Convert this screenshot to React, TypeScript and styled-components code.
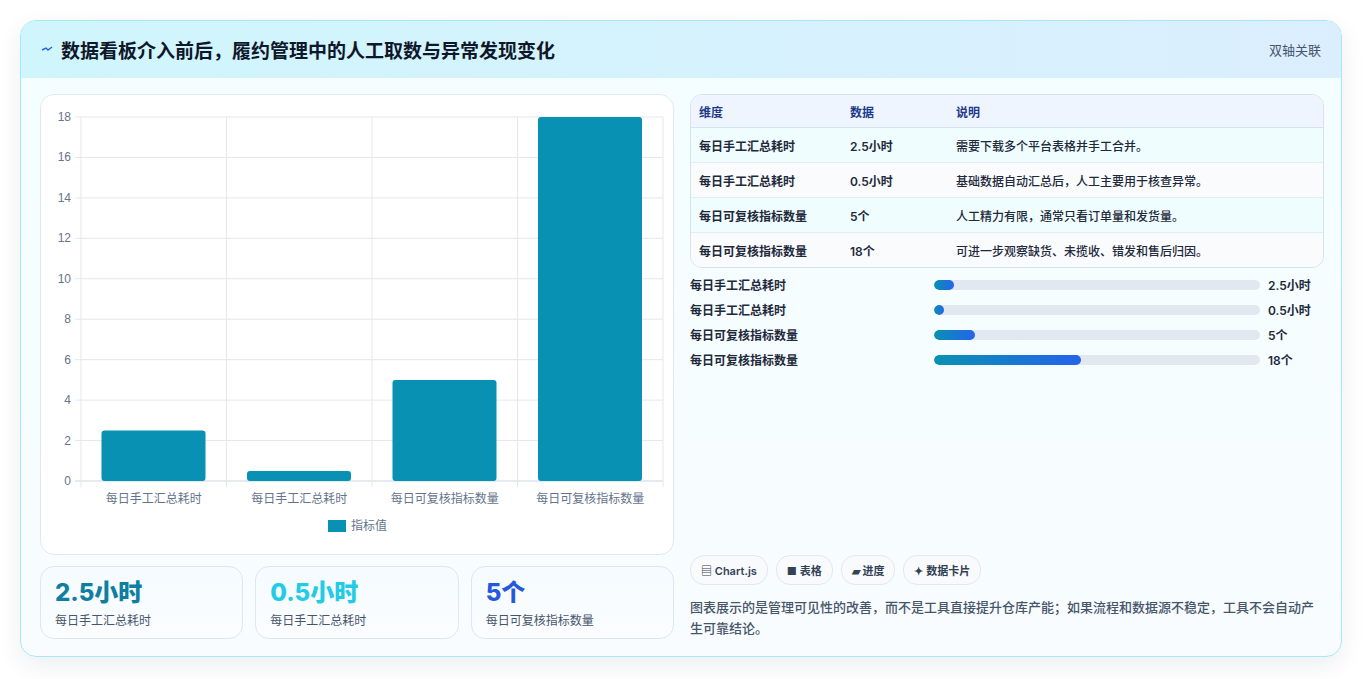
import React from 'react';
import styled, { createGlobalStyle } from 'styled-components';

const Global = createGlobalStyle`
  body { margin: 0; background: #ffffff; font-family: Inter, "Noto Sans CJK SC", sans-serif; }
`;

const Page = styled.div`
  padding: 20px 20px 22px 20px;
`;

const Card = styled.div`
  width: 1322px;
  height: 637px;
  box-sizing: border-box;
  border: 1px solid #a5e9f3;
  border-radius: 16px;
  background: linear-gradient(180deg, #f3feff 0%, #f8fcff 100%);
  box-shadow: 0 8px 24px rgba(15, 40, 70, 0.08);
  overflow: hidden;
  display: flex;
  flex-direction: column;
`;

const Header = styled.div`
  height: 56px;
  flex: none;
  display: flex;
  align-items: center;
  justify-content: space-between;
  padding: 0 20px;
  background: linear-gradient(90deg, #cff6fc 0%, #dbeefe 100%);
  border-bottom: 1px solid #d4f1f7;
`;

const Title = styled.h1`
  margin: 0;
  font-size: 19px;
  font-weight: 700;
  color: #0f172a;
  display: flex;
  align-items: center;
  gap: 8px;
`;

const Badge = styled.span`
  font-size: 13px;
  color: #475569;
`;

const Body = styled.div`
  flex: 1;
  display: grid;
  grid-template-columns: 634px 634px;
  gap: 16px;
  padding: 16px 19px 18px 19px;
`;

const Left = styled.div`
  display: flex;
  flex-direction: column;
  gap: 11px;
`;

const ChartPanel = styled.div`
  height: 461px;
  box-sizing: border-box;
  background: #ffffff;
  border: 1px solid #e2e8f0;
  border-radius: 14px;
`;

const Stats = styled.div`
  display: grid;
  grid-template-columns: repeat(3, 1fr);
  gap: 12px;
`;

const Stat = styled.div`
  height: 73px;
  box-sizing: border-box;
  border: 1px solid #dbe7f5;
  border-radius: 14px;
  background: linear-gradient(180deg, #f5fbff, #fbfdff);
  padding: 10px 14px;
`;

const StatValue = styled.div<{ $color: string }>`
  font-size: 24px;
  font-weight: 800;
  color: ${(p) => p.$color};
  line-height: 32px;
`;

const StatLabel = styled.div`
  font-size: 12px;
  color: #475569;
  margin-top: 2px;
`;

const Right = styled.div`
  display: flex;
  flex-direction: column;
`;

const Table = styled.table`
  width: 100%;
  border-collapse: separate;
  border-spacing: 0;
  border: 1px solid #d6e2ee;
  border-radius: 12px;
  overflow: hidden;
  font-size: 12px;
`;

const Th = styled.th`
  text-align: left;
  height: 32px;
  padding: 0 8px;
  background: #eef5fe;
  color: #1e3a8a;
  font-weight: 700;
  border-bottom: 1px solid #d6e2ee;
`;

const Tr = styled.tr<{ $alt: boolean }>`
  background: ${(p) => (p.$alt ? '#fafbfd' : '#f0fdff')};
  td { border-bottom: 1px solid #e3ebf3; }
  &:last-child td { border-bottom: none; }
`;

const Td = styled.td<{ $bold?: boolean }>`
  height: 34px;
  padding: 0 8px;
  color: #1e293b;
  font-weight: ${(p) => (p.$bold ? 600 : 500)};
`;

const Bars = styled.div`
  display: flex;
  flex-direction: column;
  gap: 8px;
  margin-top: 8px;
`;

const BarRow = styled.div`
  display: grid;
  grid-template-columns: 236px 326px 1fr;
  gap: 8px;
  align-items: center;
  height: 17px;
  font-size: 12px;
  font-weight: 600;
  color: #1e293b;
`;

const Track = styled.div`
  height: 10px;
  border-radius: 5px;
  background: #e2e8f0;
  overflow: hidden;
`;

const Fill = styled.div`
  height: 100%;
  border-radius: 5px;
  background: linear-gradient(90deg, #0891b2, #2563eb);
`;

const Spacer = styled.div`
  flex: 1;
`;

const Chips = styled.div`
  display: flex;
  gap: 8px;
`;

const Chip = styled.span`
  height: 28px;
  padding: 0 10px;
  display: inline-flex;
  align-items: center;
  gap: 3px;
  border: 1px solid #e2e8f0;
  border-radius: 14px;
  background: #f8fafc;
  font-size: 11px;
  font-weight: 600;
  color: #334155;
`;

const Note = styled.p`
  margin: 12px 0 0;
  font-size: 13px;
  line-height: 21px;
  color: #475569;
  font-weight: 500;
`;

const rows = [
  ['每日手工汇总耗时', '2.5小时', '需要下载多个平台表格并手工合并。', 2.5],
  ['每日手工汇总耗时', '0.5小时', '基础数据自动汇总后，人工主要用于核查异常。', 0.5],
  ['每日可复核指标数量', '5个', '人工精力有限，通常只看订单量和发货量。', 5],
  ['每日可复核指标数量', '18个', '可进一步观察缺货、未揽收、错发和售后归因。', 18],
] as const;

const Chart = () => {
  const L = 40, R = 622, T = 22, B = 386;
  const h = B - T;
  const w = (R - L) / 4;
  const ticks = [0, 2, 4, 6, 8, 10, 12, 14, 16, 18];
  return (
    <svg width="632" height="459" style={{ display: 'block' }}>
      {ticks.map((t) => {
        const y = B - (t / 18) * h;
        return (
          <g key={t}>
            <line x1={L - 6} x2={R} y1={y} y2={y} stroke={t === 0 ? '#cbd5e1' : '#e5e7eb'} />
            <text x={L - 10} y={y + 4} fontSize="12" textAnchor="end" fill="#64748b" fontFamily="Liberation Sans, sans-serif">{t}</text>
          </g>
        );
      })}
      {[0, 1, 2, 3, 4].map((i) => (
        <line key={i} x1={L + i * w} x2={L + i * w} y1={T} y2={B + 6} stroke="#e5e7eb" />
      ))}
      {rows.map((r, i) => {
        const v = r[3] as number;
        const bh = (v / 18) * h;
        return (
          <g key={i}>
            <rect x={L + i * w + 20.5} y={B - bh} width={104} height={bh} rx="3" fill="#0891b2" />
            <text x={L + i * w + w / 2} y={B + 22} fontSize="12" textAnchor="middle" fill="#64748b">{r[0]}</text>
          </g>
        );
      })}
      <rect x="287" y="425" width="18" height="12" fill="#0891b2" />
      <text x="310" y="435" fontSize="12" fill="#64748b">指标值</text>
    </svg>
  );
};

export default function App() {
  return (
    <Page>
      <Global />
      <Card>
        <Header>
          <Title>
            <svg width="12" height="10" viewBox="0 0 12 10">
              <path d="M1 6 L5 4 L7 6 L11 3" stroke="#2563eb" strokeWidth="1.4" fill="none" />
            </svg>
            数据看板介入前后，履约管理中的人工取数与异常发现变化
          </Title>
          <Badge>双轴关联</Badge>
        </Header>
        <Body>
          <Left>
            <ChartPanel>
              <Chart />
            </ChartPanel>
            <Stats>
              <Stat>
                <StatValue $color="#0e7fa0">2.5小时</StatValue>
                <StatLabel>每日手工汇总耗时</StatLabel>
              </Stat>
              <Stat>
                <StatValue $color="#22cbe6">0.5小时</StatValue>
                <StatLabel>每日手工汇总耗时</StatLabel>
              </Stat>
              <Stat>
                <StatValue $color="#2557e0">5个</StatValue>
                <StatLabel>每日可复核指标数量</StatLabel>
              </Stat>
            </Stats>
          </Left>
          <Right>
            <Table>
              <thead>
                <tr>
                  <Th style={{ width: 135 }}>维度</Th>
                  <Th style={{ width: 90 }}>数据</Th>
                  <Th>说明</Th>
                </tr>
              </thead>
              <tbody>
                {rows.map((r, i) => (
                  <Tr key={i} $alt={i % 2 === 1}>
                    <Td $bold>{r[0]}</Td>
                    <Td $bold>{r[1]}</Td>
                    <Td>{r[2]}</Td>
                  </Tr>
                ))}
              </tbody>
            </Table>
            <Bars>
              {rows.map((r, i) => (
                <BarRow key={i}>
                  <span>{r[0]}</span>
                  <Track>
                    <Fill style={{ width: `${Math.max(3, ((r[3] as number) / 40) * 100)}%` }} />
                  </Track>
                  <span>{r[1]}</span>
                </BarRow>
              ))}
            </Bars>
            <Spacer />
            <Chips>
              <Chip>▤ Chart.js</Chip>
              <Chip>■ 表格</Chip>
              <Chip>▰ 进度</Chip>
              <Chip>✦ 数据卡片</Chip>
            </Chips>
            <Note>
              图表展示的是管理可见性的改善，而不是工具直接提升仓库产能；如果流程和数据源不稳定，工具不会自动产生可靠结论。
            </Note>
          </Right>
        </Body>
      </Card>
    </Page>
  );
}
